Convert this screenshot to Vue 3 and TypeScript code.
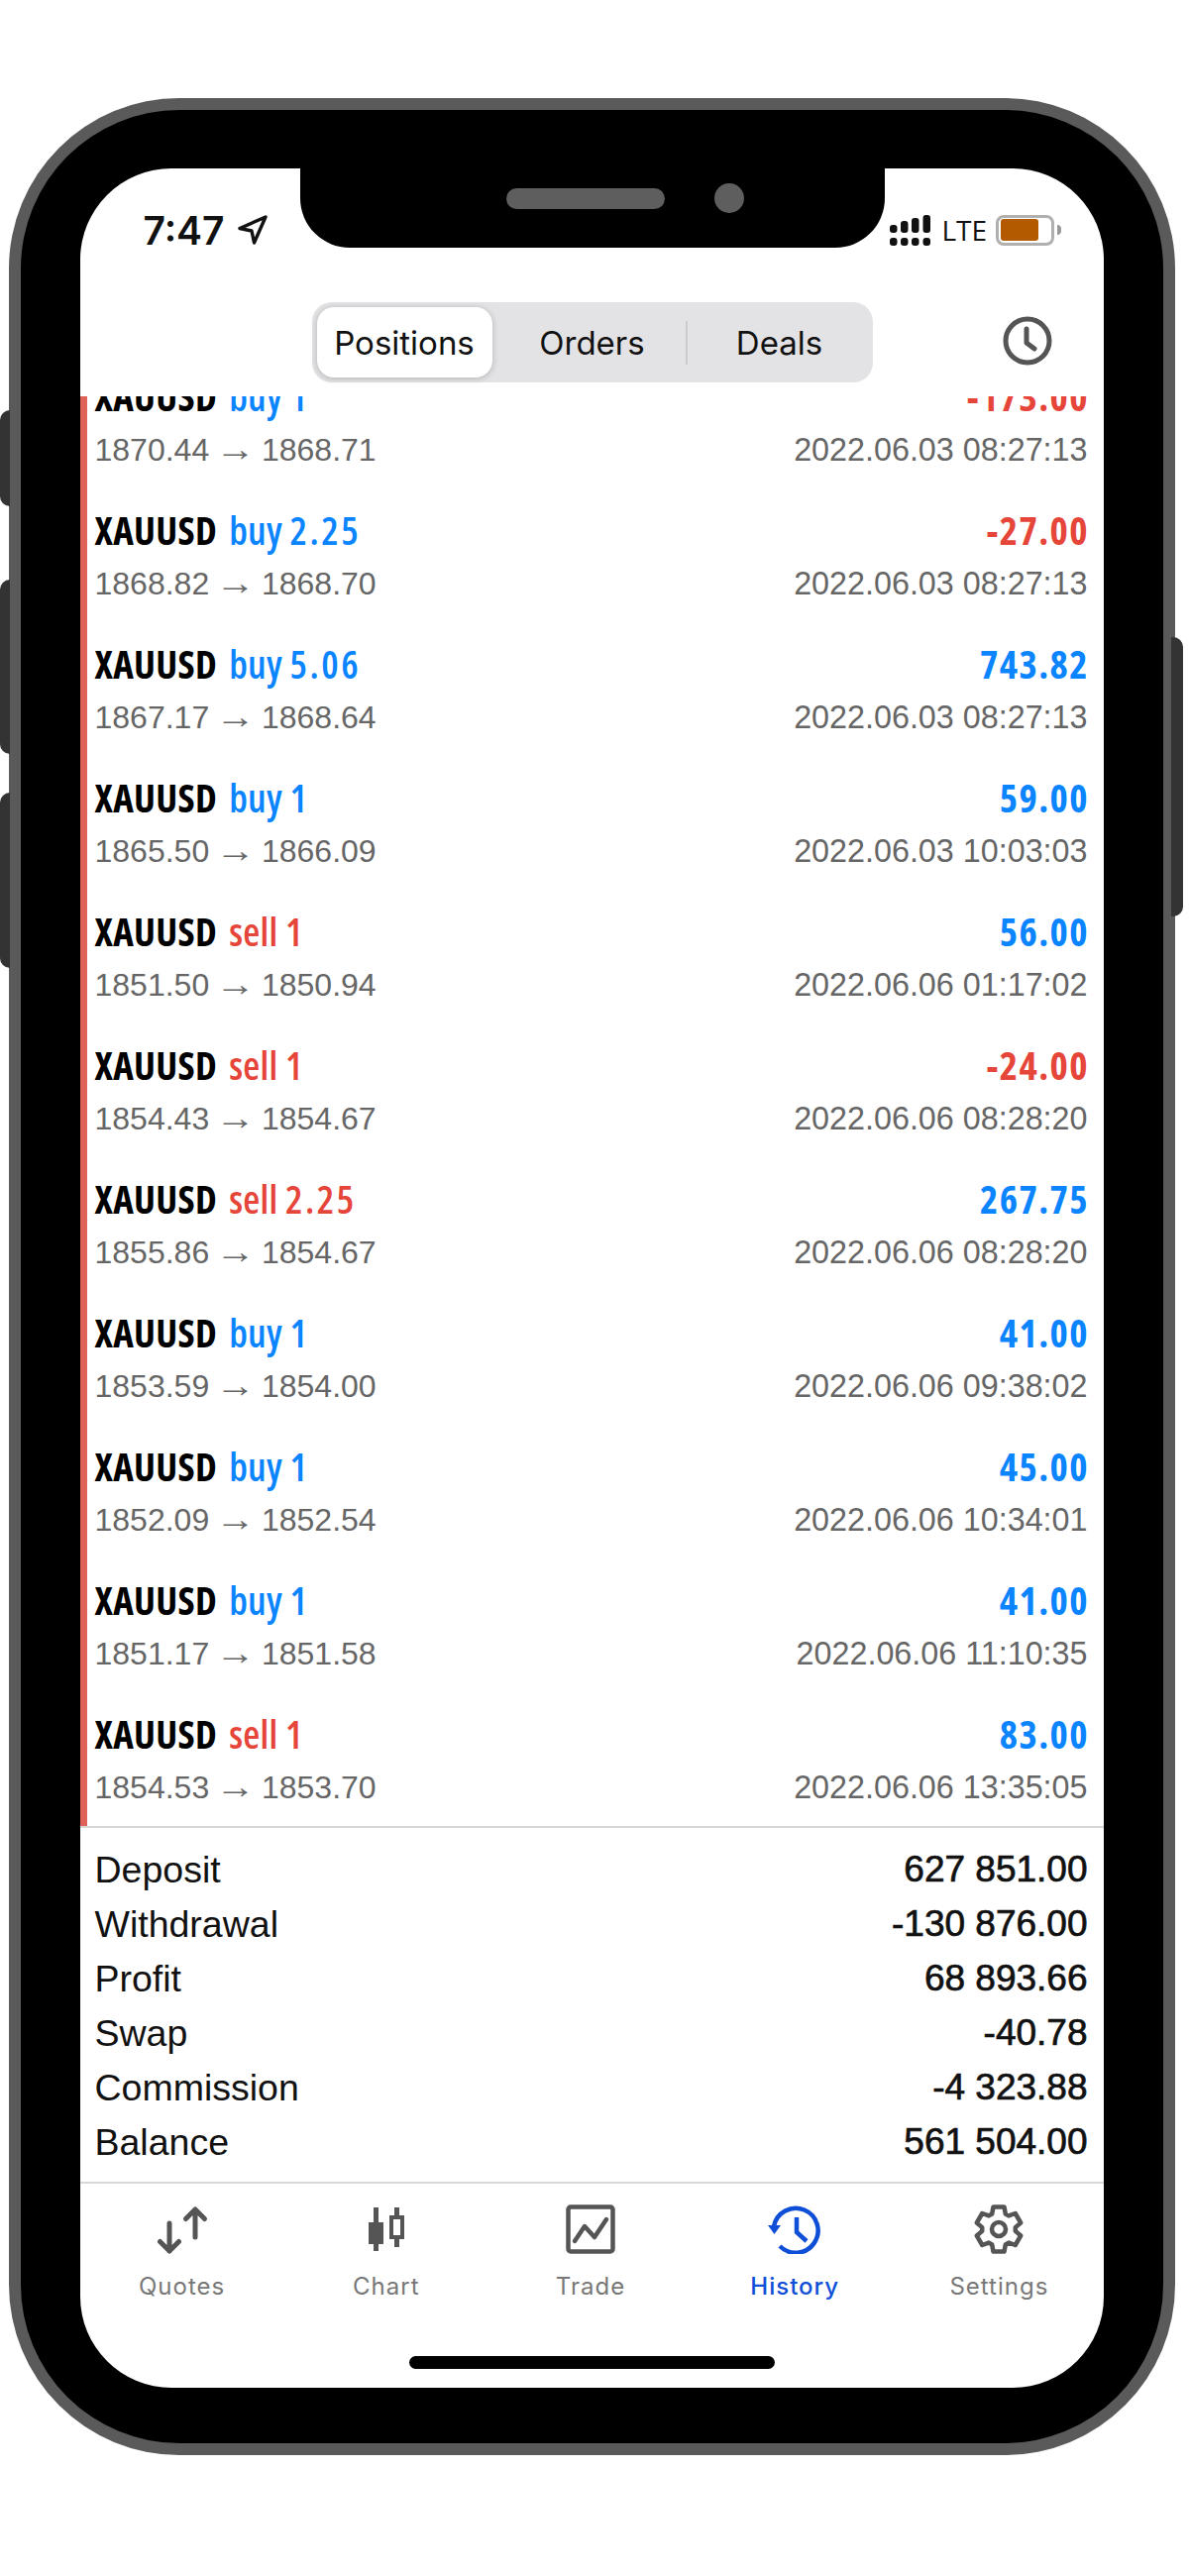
<template>
  <div class="page">
    <div class="device">
      <span class="side-btn mute" />
      <span class="side-btn vol-up" />
      <span class="side-btn vol-down" />
      <span class="side-btn power" />
      <div class="bezel">
        <div class="screen">
          <div class="notch">
            <span class="speaker" />
            <span class="camera" />
          </div>

          <header class="status">
            <div class="status-left">
              <span class="time">7:47</span>
              <svg class="nav-arrow" viewBox="0 0 32 32" fill="none" stroke="#111" stroke-width="3.4" stroke-linejoin="round">
                <path d="M29 3 3 14.5l12 2.500 2.500 12z" />
              </svg>
            </div>
            <div class="status-right">
              <svg class="signal" viewBox="0 0 41 31" fill="#111">
                <rect x="0" y="10" width="7.500" height="8" rx="3" />
                <rect x="0" y="23" width="7.500" height="8" rx="3" />
                <rect x="11" y="6" width="7.500" height="12" rx="3" />
                <rect x="11" y="23" width="7.500" height="8" rx="3" />
                <rect x="22" y="3" width="7.500" height="15" rx="3" />
                <rect x="22" y="23" width="7.500" height="8" rx="3" />
                <rect x="33.500" y="0" width="7.500" height="18" rx="3" />
                <rect x="33.500" y="23" width="7.500" height="8" rx="3" />
              </svg>
              <span class="lte">LTE</span>
              <span class="battery"><span class="battery-fill" /></span>
              <span class="battery-nub" />
            </div>
          </header>

          <nav class="toolbar">
            <div class="segments">
              <span class="segment active">Positions</span>
              <span class="segment orders">Orders</span>
              <span class="segment-sep" />
              <span class="segment deals-tab">Deals</span>
            </div>
            <svg class="clock" viewBox="0 0 50 50" fill="none" stroke="#555" stroke-width="5" stroke-linecap="round" stroke-linejoin="round">
              <circle cx="25" cy="25" r="22" />
              <path d="M24 13v14l8 6" />
            </svg>
          </nav>

          <section class="deals">
            <div v-for="(deal, i) in deals" :key="i" class="deal">
              <div class="deal-line">
                <span class="title">
                  <span class="symbol">XAUUSD</span>{{ ' ' }}<span class="side" :class="deal.side">{{ deal.side }} <span class="lot">{{ deal.lot }}</span></span>
                </span>
                <span class="title amount" :class="deal.amount.startsWith('-') ? 'sell' : 'buy'">{{ deal.amount }}</span>
              </div>
              <div class="deal-line sub">
                <span>{{ deal.open }} <span class="arrow">→</span> {{ deal.close }}</span>
                <span class="stamp">{{ deal.time }}</span>
              </div>
            </div>
          </section>

          <section class="summary">
            <div v-for="item in summary" :key="item.label" class="summary-row">
              <span>{{ item.label }}</span>
              <span class="summary-value">{{ item.value }}</span>
            </div>
          </section>

          <footer class="tabbar">
            <div class="tab">
              <svg viewBox="0 0 54 50" fill="none" stroke="#555" stroke-width="5" stroke-linecap="round" stroke-linejoin="round">
                <path d="M14 19v28M4.500 37.500 14 47l9.500-9.500" />
                <path d="M40 33V5M30.500 14.500 40 5l9.500 9.500" />
              </svg>
              <span>Quotes</span>
            </div>
            <div class="tab">
              <svg viewBox="0 0 50 50" fill="#555">
                <rect x="12" y="3" width="5" height="44" />
                <rect x="7" y="18" width="15" height="22" />
                <rect x="33" y="3" width="5" height="8" />
                <rect x="33" y="35" width="5" height="8" />
                <path fill-rule="evenodd" d="M28 11h15v24H28zM32 15v16h7V15z" />
              </svg>
              <span>Chart</span>
            </div>
            <div class="tab">
              <svg viewBox="0 0 50 50" fill="none" stroke="#555" stroke-linecap="round" stroke-linejoin="round">
                <rect x="2.500" y="2.500" width="45" height="45" rx="2.500" stroke-width="4.500" />
                <path d="M9 37l10-15 10 11 12-18" stroke-width="4.500" />
              </svg>
              <span>Trade</span>
            </div>
            <div class="tab current">
              <svg viewBox="0 0 54 50" fill="none" stroke="#0f4fd8" stroke-width="4.500">
                <path d="M6 22A22.500 22.500 0 1 1 12 42" />
                <path d="M29 13v15l10 9" />
                <path d="M0 21h13l-6.500 9z" fill="#0f4fd8" stroke="none" />
              </svg>
              <span>History</span>
            </div>
            <div class="tab">
              <svg viewBox="0 0 50 50" fill="none" stroke="#555" stroke-width="4.500" stroke-linejoin="round">
                <polygon points="18.200,9.500 19.500,2.500 30.500,2.500 31.800,9.500 35,11.400 41.700,9 47.200,18.500 41.800,23.100 41.800,26.900 47.200,31.500 41.700,41 35,38.600 31.800,40.500 30.500,47.500 19.500,47.500 18.200,40.500 15,38.600 8.300,41 2.800,31.500 8.200,26.900 8.200,23.100 2.800,18.500 8.300,9 15,11.400" />
                <circle cx="25" cy="25" r="7" />
              </svg>
              <span>Settings</span>
            </div>
          </footer>
          <div class="home-area"><span class="home-bar" /></div>
        </div>
      </div>
    </div>
  </div>
</template>

<script setup lang="ts">
interface Deal {
  side: 'buy' | 'sell';
  lot: string;
  amount: string;
  open: string;
  close: string;
  time: string;
}

const deals: Deal[] = [
  { side: 'buy', lot: '1', amount: '-173.00', open: '1870.44', close: '1868.71', time: '2022.06.03 08:27:13' },
  { side: 'buy', lot: '2.25', amount: '-27.00', open: '1868.82', close: '1868.70', time: '2022.06.03 08:27:13' },
  { side: 'buy', lot: '5.06', amount: '743.82', open: '1867.17', close: '1868.64', time: '2022.06.03 08:27:13' },
  { side: 'buy', lot: '1', amount: '59.00', open: '1865.50', close: '1866.09', time: '2022.06.03 10:03:03' },
  { side: 'sell', lot: '1', amount: '56.00', open: '1851.50', close: '1850.94', time: '2022.06.06 01:17:02' },
  { side: 'sell', lot: '1', amount: '-24.00', open: '1854.43', close: '1854.67', time: '2022.06.06 08:28:20' },
  { side: 'sell', lot: '2.25', amount: '267.75', open: '1855.86', close: '1854.67', time: '2022.06.06 08:28:20' },
  { side: 'buy', lot: '1', amount: '41.00', open: '1853.59', close: '1854.00', time: '2022.06.06 09:38:02' },
  { side: 'buy', lot: '1', amount: '45.00', open: '1852.09', close: '1852.54', time: '2022.06.06 10:34:01' },
  { side: 'buy', lot: '1', amount: '41.00', open: '1851.17', close: '1851.58', time: '2022.06.06 11:10:35' },
  { side: 'sell', lot: '1', amount: '83.00', open: '1854.53', close: '1853.70', time: '2022.06.06 13:35:05' },
];

const summary = [
  { label: 'Deposit', value: '627 851.00' },
  { label: 'Withdrawal', value: '-130 876.00' },
  { label: 'Profit', value: '68 893.66' },
  { label: 'Swap', value: '-40.78' },
  { label: 'Commission', value: '-4 323.88' },
  { label: 'Balance', value: '561 504.00' },
];
</script>

<style>
html,
body {
  background: #fff;
}
</style>

<style scoped>
.page {
  width: 1200px;
  height: 2600px;
  padding-top: 99px;
  box-sizing: border-box;
  font-family: 'Liberation Sans', Arial, sans-serif;
}

.device {
  position: relative;
  width: 1177px;
  height: 2379px;
  margin-left: 8.500px;
  box-sizing: border-box;
  padding: 12px;
  background: #5a5a5a;
  border-radius: 172px;
}

.side-btn {
  position: absolute;
  width: 10px;
  background: #333;
}

.mute,
.vol-up,
.vol-down {
  left: -8.500px;
  border-radius: 10px 0 0 10px;
}

.mute {
  top: 315px;
  height: 97px;
}

.vol-up {
  top: 486px;
  height: 176px;
}

.vol-down {
  top: 701px;
  height: 177px;
}

.power {
  top: 544px;
  right: -8px;
  width: 12px;
  height: 282px;
  border-radius: 0 10px 10px 0;
}

.bezel {
  height: 100%;
  box-sizing: border-box;
  padding: 59px 60px 56px;
  background: #000;
  border-radius: 160px;
}

.screen {
  position: relative;
  display: flex;
  flex-direction: column;
  height: 100%;
  overflow: hidden;
  background: #fff;
  border-radius: 92px;
}

.notch {
  position: absolute;
  top: 0;
  left: 222px;
  display: flex;
  align-items: center;
  justify-content: flex-end;
  gap: 50px;
  width: 590px;
  height: 80px;
  box-sizing: border-box;
  padding: 0 142px 20px 0;
  background: #000;
  border-radius: 0 0 50px 50px;
}

.speaker {
  width: 160px;
  height: 21px;
  background: #5e5e5e;
  border-radius: 11px;
}

.camera {
  width: 30px;
  height: 30px;
  background: #5e5e5e;
  border-radius: 50%;
}

.status {
  display: flex;
  align-items: center;
  justify-content: space-between;
  flex: none;
  height: 135px;
  box-sizing: border-box;
  padding: 0 43px 11px 64px;
}

.status-left {
  display: flex;
  align-items: center;
  gap: 12px;
}

.time {
  font-family: Inter, 'Liberation Sans', sans-serif;
  font-size: 39px;
  font-weight: 600;
  color: #111;
}

.nav-arrow {
  width: 32px;
  height: 32px;
}

.status-right {
  display: flex;
  align-items: center;
}

.signal {
  width: 41px;
  height: 31px;
  margin-right: 12px;
}

.lte {
  width: 43px;
  margin-right: 11px;
  font-family: 'Open Sans', sans-serif;
  font-size: 28px;
  color: #111;
}

.battery {
  display: flex;
  align-items: center;
  width: 59px;
  height: 31px;
  box-sizing: border-box;
  padding: 0 2px;
  border: 3px solid #b0b0b0;
  border-radius: 8px;
}

.battery-fill {
  width: 38px;
  height: 22px;
  background: #b35900;
  border-radius: 3px;
}

.battery-nub {
  width: 4px;
  height: 10px;
  margin-left: 3px;
  background: #999;
  border-radius: 0 4px 4px 0;
}

.toolbar {
  flex: none;
  height: 95px;
  display: flex;
  align-items: flex-start;
  padding-left: 234px;
  background: #fff;
}

.segments {
  display: grid;
  grid-template-columns: 177px 195px 2px 1fr;
  align-items: center;
  width: 566px;
  height: 81px;
  box-sizing: border-box;
  padding: 5px;
  background: #e3e3e6;
  border-radius: 20px;
}

.segment {
  display: flex;
  align-items: center;
  justify-content: center;
  height: 71px;
  font-family: Inter, 'Liberation Sans', sans-serif;
  font-size: 33px;
  color: #111;
}

.segment.orders {
  padding-left: 7px;
}

.segment.deals-tab {
  padding-left: 4px;
}

.segment.active {
  background: #fff;
  border-radius: 17px;
  box-shadow: 0 1px 6px rgba(0, 0, 0, 0.22);
}

.segment-sep {
  height: 44px;
  background: #ccc;
}

.clock {
  width: 50px;
  height: 50px;
  margin: 14px 0 0 131px;
}

.deals {
  flex: 1;
  min-height: 0;
  display: flex;
  flex-direction: column;
  justify-content: flex-end;
  overflow: hidden;
  border-left: 7px solid #e0635a;
}

.deal {
  flex: none;
  height: 135px;
  box-sizing: border-box;
  padding: 16px 16px 0 8px;
}

.deal-line {
  display: flex;
  justify-content: space-between;
  align-items: center;
}

.title {
  height: 52px;
  line-height: 52px;
  font-family: 'Open Sans', 'Noto Sans', sans-serif;
  font-size: 39px;
  font-weight: 600;
  font-stretch: 75%;
  white-space: nowrap;
}

.symbol {
  color: #000;
  font-weight: 700;
  letter-spacing: 0.3px;
}

.side {
  margin-left: 5px;
  letter-spacing: 0.3px;
}

.lot {
  letter-spacing: 2.500px;
}

.amount {
  margin-right: -1.400px;
  font-weight: 700;
  letter-spacing: 1.400px;
}

.buy {
  color: #0a84ff;
}

.sell {
  color: #e6453a;
}

.sub {
  height: 56px;
  font-size: 32px;
  color: #666;
}

.stamp {
  font-size: 32.300px;
}

.arrow {
  display: inline-block;
  font-size: 35px;
  line-height: 1;
  transform: scaleX(1.15);
}

.summary {
  flex: none;
  padding: 14.500px 16px 12.500px 15px;
  border-top: 2px solid #d8d8d8;
  border-bottom: 2px solid #d8d8d8;
}

.summary-row {
  display: flex;
  justify-content: space-between;
  align-items: center;
  height: 55px;
  font-size: 37.500px;
  color: #111;
}

.summary-value {
  font-size: 37px;
  -webkit-text-stroke: 0.7px #111;
}

.tabbar {
  flex: none;
  display: grid;
  grid-template-columns: repeat(5, 1fr);
  padding: 21px 2px 0 0;
}

.tab {
  display: flex;
  flex-direction: column;
  align-items: center;
  gap: 17.500px;
  font-family: Inter, 'Liberation Sans', sans-serif;
  font-size: 24px;
  line-height: 29px;
  letter-spacing: 1px;
  color: #777;
}

.tab svg {
  height: 50px;
}

.tab.current {
  color: #0f4fd8;
  font-weight: 500;
}

.home-area {
  flex: none;
  height: 88.500px;
  box-sizing: border-box;
  display: flex;
  align-items: flex-end;
  justify-content: center;
  padding-bottom: 19px;
}

.home-bar {
  width: 369px;
  height: 13px;
  background: #000;
  border-radius: 7px;
}
</style>
